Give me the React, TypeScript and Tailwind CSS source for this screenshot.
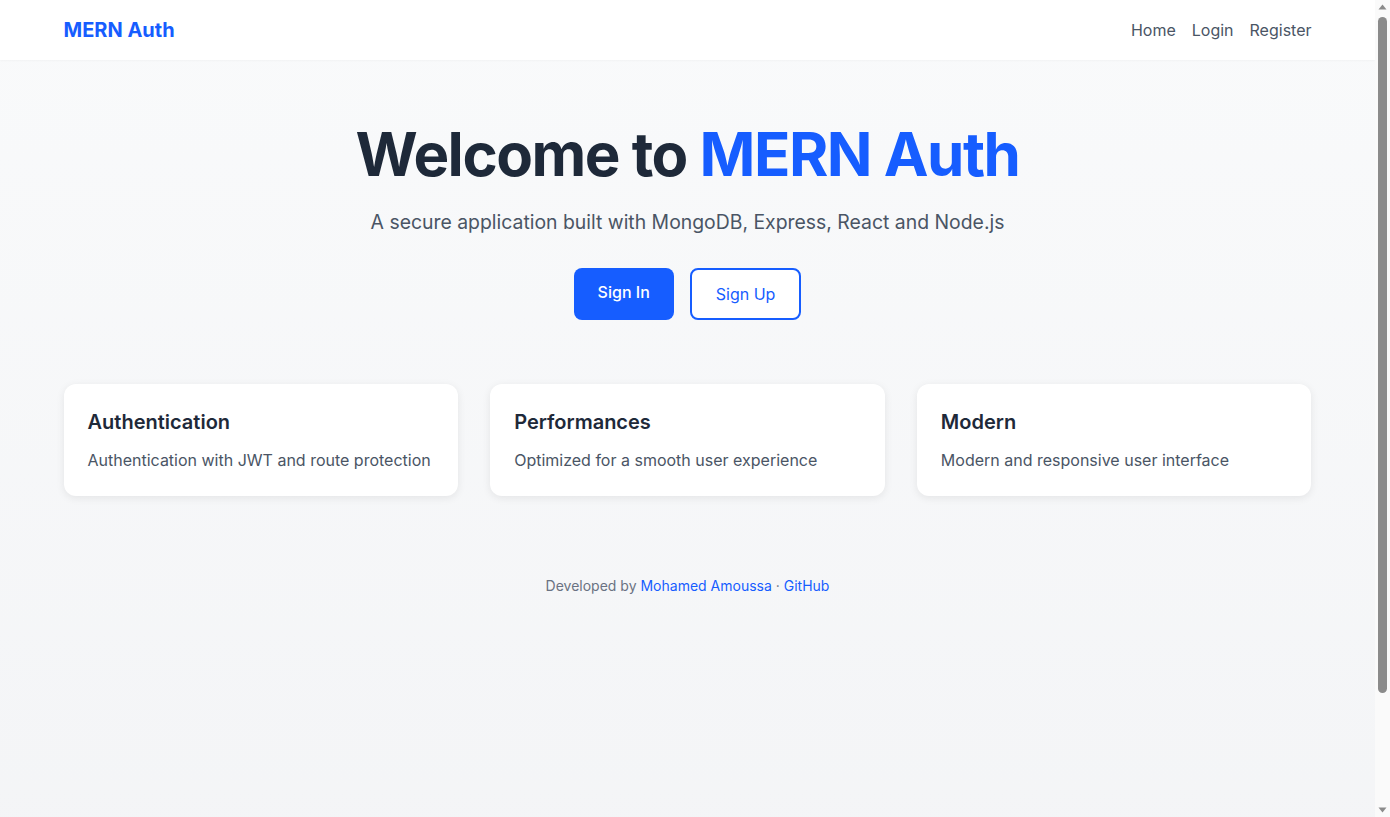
const features = [
  { title: 'Authentication', text: 'Authentication with JWT and route protection' },
  { title: 'Performances', text: 'Optimized for a smooth user experience' },
  { title: 'Modern', text: 'Modern and responsive user interface' },
]

function Scrollbar() {
  return (
    <div className="w-[15px] shrink-0 flex flex-col items-center bg-[#fafafa]">
      <svg width="9" height="6" viewBox="0 0 9 6" className="mt-[4px]">
        <path d="M4.5 0.5 L8.5 5.5 L0.5 5.5 Z" fill="#8b8b8b" />
      </svg>
      <div className="mt-[7px] w-[9px] h-[676px] rounded-full bg-[#8b8b8b]" />
      <div className="flex-1" />
      <svg width="9" height="6" viewBox="0 0 9 6" className="mb-[4px]">
        <path d="M0.5 0.5 L8.5 0.5 L4.5 5.5 Z" fill="#8b8b8b" />
      </svg>
    </div>
  )
}

export default function App() {
  return (
    <div className="flex h-screen overflow-hidden font-['Inter',sans-serif]">
      <div className="flex-1 min-w-0 overflow-hidden">
        <div className="min-h-[948px] flex flex-col bg-linear-to-b from-[#f9fafb] to-[#f3f4f6]">
          <header className="bg-white shadow-[0_1px_2px_rgba(0,0,0,0.03)]">
            <div className="max-w-7xl mx-auto px-4 h-[60px] flex items-center justify-between">
              <a className="text-xl font-bold text-[#165dff]">MERN Auth</a>
              <nav className="flex items-center gap-4 text-base text-gray-600">
                <a>Home</a>
                <a>Login</a>
                <a>Register</a>
              </nav>
            </div>
          </header>

          <main className="flex-1 max-w-7xl w-full mx-auto px-4">
            <section className="pt-[64px] text-center">
              <h1 className="text-6xl leading-none font-bold text-gray-800 tracking-tight">
                Welcome to <span className="text-[#165dff]">MERN Auth</span>
              </h1>
              <p className="mt-6 text-[19.4px] leading-7 text-gray-600">
                A secure application built with MongoDB, Express, React and Node.js
              </p>
              <div className="mt-8 flex justify-center gap-4">
                <button className="bg-[#165dff] text-white font-medium px-6 pt-3 pb-4 rounded-lg leading-6">
                  Sign In
                </button>
                <button className="bg-white text-[#165dff] border-2 border-[#165dff] px-6 py-3 rounded-lg leading-6">
                  Sign Up
                </button>
              </div>
            </section>

            <section className="mt-16 grid grid-cols-3 gap-8">
              {features.map(f => (
                <div key={f.title} className="bg-white rounded-xl shadow-[0_2px_8px_rgba(0,0,0,0.08)] p-6">
                  <h3 className="text-xl font-semibold text-gray-800 mb-3">{f.title}</h3>
                  <p className="text-base text-gray-600">{f.text}</p>
                </div>
              ))}
            </section>

            <footer className="mt-20 text-center text-sm text-gray-500">
              Developed by <a className="text-[#165dff]">Mohamed Amoussa</a> · <a className="text-[#165dff]">GitHub</a>
            </footer>
          </main>
        </div>
      </div>
      <Scrollbar />
    </div>
  )
}
